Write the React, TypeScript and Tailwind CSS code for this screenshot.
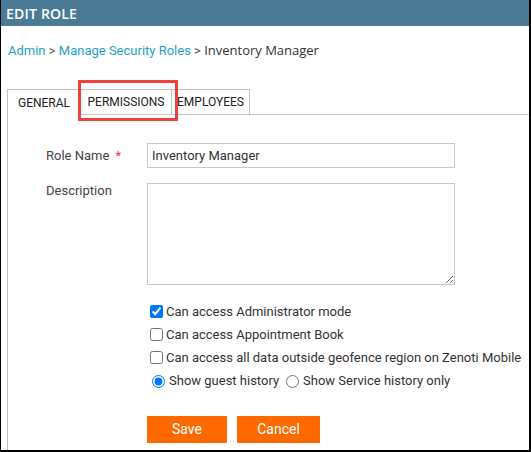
import React from 'react';

const tabs = [
  { label: 'GENERAL', w: 'w-[74px]', active: true },
  { label: 'PERMISSIONS', w: 'w-[91px]', active: false },
  { label: 'EMPLOYEES', w: 'w-[78px]', active: false },
];

const permissions = [
  { label: 'Can access Administrator mode', checked: true },
  { label: 'Can access Appointment Book', checked: false },
  { label: 'Can access all data outside geofence region on Zenoti Mobile', checked: false },
];

export default function App() {
  return (
    <div className="relative h-[452px] w-[531px] overflow-hidden border-b-2 border-l border-r-2 border-black bg-white font-['Roboto',sans-serif] text-[13px] text-[#333]">
      {/* Header */}
      <div className="flex h-[26px] items-center bg-[#4b7b94] pl-[5px] font-['Open_Sans',sans-serif] text-[14px] font-semibold tracking-[0.2px] text-white">
        EDIT ROLE
      </div>

      {/* Breadcrumb */}
      <div className="mt-[16px] pl-[7px] leading-[16px]">
        <span className="text-[#1f9fc9]">Admin</span>
        <span className="text-[#555]"> &gt; </span>
        <span className="text-[#1f9fc9]">Manage Security Roles</span>
        <span className="text-[#555]"> &gt; </span>
        <span className="font-['Open_Sans',sans-serif] text-[#333]">Inventory Manager</span>
      </div>

      {/* Tabs */}
      <div className="ml-[6px] mt-[30px] flex h-[26px]">
        {tabs.map((t, i) => (
          <div
            key={t.label}
            className={`flex ${t.w} items-center justify-center border-t border-r border-[#c4c4c4] text-[12px] text-[#222] ${
              i === 0 ? 'border-l' : ''
            } ${t.active ? '' : 'border-b'}`}
          >
            {t.label}
          </div>
        ))}
        <div className="flex-1 border-b border-[#c4c4c4]" />
      </div>

      {/* Tab panel */}
      <div className="ml-[6px] h-full border-l border-[#c4c4c4] pl-[38px] pt-[28px]">
        <div className="flex items-center">
          <label className="w-[101px] text-[#444]">
            Role Name <span className="ml-[3px] text-[#e53935]">*</span>
          </label>
          <input
            defaultValue="Inventory Manager"
            className="h-[25px] w-[308px] border border-[#c8c8c8] px-[4px] text-[13px] text-[#333] outline-none"
          />
        </div>

        <div className="mt-[15px] flex items-start">
          <label className="w-[101px] leading-[16px] text-[#444]">Description</label>
          <textarea className="h-[102px] w-[308px] border border-[#c8c8c8] outline-none" />
        </div>

        <div className="ml-[104px] mt-[15px] flex flex-col">
          {permissions.map((p) => (
            <label key={p.label} className="flex h-[23px] items-center gap-[3px]">
              <input type="checkbox" defaultChecked={p.checked} className="m-0 h-[13px] w-[13px] accent-[#0075ff]" />
              <span>{p.label}</span>
            </label>
          ))}
          <div className="flex h-[24px] items-center pl-[2px]">
            <label className="flex items-center gap-[4px]">
              <input type="radio" name="history" defaultChecked className="m-0 h-[13px] w-[13px] accent-[#0075ff]" />
              <span>Show guest history</span>
            </label>
            <label className="ml-[7px] flex items-center gap-[4px]">
              <input type="radio" name="history" className="m-0 h-[13px] w-[13px]" />
              <span>Show Service history only</span>
            </label>
          </div>
        </div>

        <div className="ml-[101px] mt-[23px] flex gap-[10px]">
          <button className="h-[27px] w-[80px] bg-[#ff6a00] text-[14px] text-white">Save</button>
          <button className="h-[27px] w-[83px] bg-[#ff6a00] text-[14px] text-white">Cancel</button>
        </div>
      </div>

      {/* annotation highlight */}
      <div className="pointer-events-none absolute left-[77px] top-[80px] h-[41px] w-[100px] border-[3px] border-[#f2403f]" />
    </div>
  );
}
